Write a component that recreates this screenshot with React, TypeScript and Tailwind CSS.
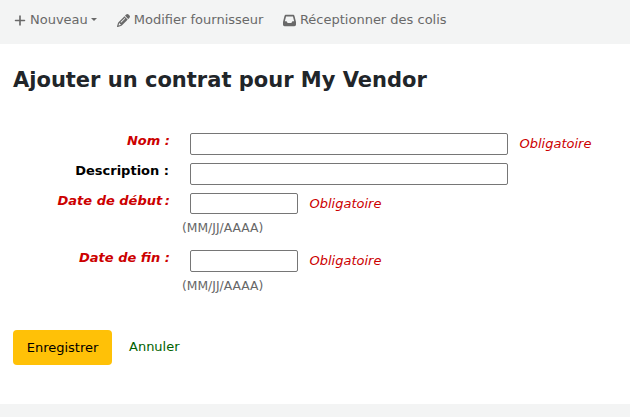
import { FaPlus, FaPencil, FaInbox } from "react-icons/fa6";

function Required() {
  return <span className="ml-[11.5px] italic text-[#cc0000]">Obligatoire</span>;
}

function Row({ label, required, wide, short, hint, className }: { label: string; required?: boolean; wide?: boolean; short?: boolean; hint?: boolean; className?: string }) {
  return (
    <div className={className}>
      <div className="flex items-center">
        <label className={`w-[157px] shrink-0 self-start text-right font-bold leading-[16px] ${required ? "italic text-[#cc0000]" : "pr-[1px] text-black"}`}>
          {label}
        </label>
        <input type="text" className={`ml-[20px] rounded-[2px] border border-[#767676] bg-white ${short ? "h-[21px]" : "h-[22px]"} ${wide ? "w-[318px]" : "w-[108px]"}`} />
        {required && <Required />}
      </div>
      {hint && <div className="ml-[169px] mt-[6px] text-[12.35px] leading-[16px] text-[#666666]">(MM/JJ/AAAA)</div>}
    </div>
  );
}

export default function App() {
  return (
    <div className="h-[417px] w-[630px] overflow-hidden bg-white font-['DejaVu_Sans',sans-serif] text-[13px] text-[#212529]">
      <div className="flex h-[44px] items-center gap-[20px] bg-[#f3f4f4] pb-[4px] pl-[14px] text-[#696969]">
        <span className="flex items-center">
          <FaPlus className="mr-[4px] h-[13px] w-[12px]" />
          Nouveau
          <span className="mb-[2px] ml-[3px] border-x-[3px] border-t-[3px] border-x-transparent border-t-[#696969]" />
        </span>
        <span className="flex items-center">
          <FaPencil className="mr-[4px] h-[13px] w-[13px]" />
          Modifier fournisseur
        </span>
        <span className="flex items-center">
          <FaInbox className="mr-[3.5px] h-[13px] w-[13px]" />
          Réceptionner des colis
        </span>
      </div>
      <h1 className="ml-[13px] mt-[24px] text-[21px] font-bold leading-[25px] text-[#212529]">Ajouter un contrat pour My Vendor</h1>
      <form className="ml-[13px] mt-[40px]">
        <Row label="Nom :" required wide />
        <Row label="Description :" wide className="mt-[8px]" />
        <Row label={"Date de début\u202F:"} required short hint className="mt-[8px]" />
        <Row label="Date de fin :" required hint className="mt-[14px]" />
        <div className="mt-[36px] flex items-center">
          <button type="button" className="h-[35px] w-[99px] rounded-[4px] bg-[#ffc107] text-black">Enregistrer</button>
          <a className="mb-[2px] ml-[17px] text-[#006100]">Annuler</a>
        </div>
      </form>
      <div className="mt-[39px] h-[13px] bg-[#f3f4f4]" />
    </div>
  );
}
